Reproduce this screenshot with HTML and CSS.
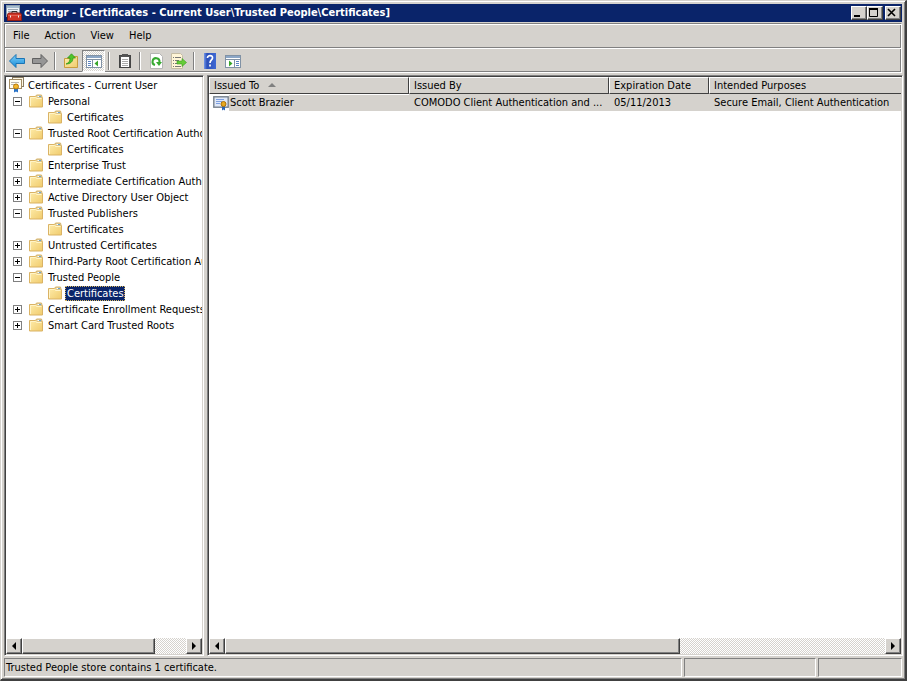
FILE: index.html
```html
<!DOCTYPE html>
<html lang="en">
<head>
<meta charset="utf-8">
<title>certmgr</title>
<link rel="stylesheet" href="styles.css">
</head>
<body>
<svg class="defs" aria-hidden="true">
  <defs>
    <linearGradient id="fold" x1="0" y1="0" x2="1" y2="1"><stop offset="0" stop-color="#ffeeae"/><stop offset="1" stop-color="#f0cb6c"/></linearGradient>
    <linearGradient id="blue" x1="0" y1="0" x2="0" y2="1"><stop offset="0" stop-color="#7fd0f8"/><stop offset="1" stop-color="#168bd8"/></linearGradient>
    <linearGradient id="help" x1="0" y1="0" x2="1" y2="0"><stop offset="0" stop-color="#7397e8"/><stop offset=".25" stop-color="#2c4fb8"/><stop offset="1" stop-color="#3f69d4"/></linearGradient>
    <symbol id="folder" viewBox="0 0 16 16">
      <path d="M1.500 3.500h6l1-1.500h5l.5 2 .5 1v9h-13z" fill="url(#fold)" stroke="#dab365"/>
      <path d="M8.500 2.500h5v2h-4z" fill="#fff" stroke="#c3a45f" stroke-width=".6"/><path d="M11 3.500h2" stroke="#6ba6cf"/>
      <path d="M2.500 13v-8.500h5l1 1h5" fill="none" stroke="#fff4c8"/>
    </symbol>
    <symbol id="cert" viewBox="0 0 16 16">
      <rect x=".8" y="1.800" width="14.400" height="10.400" fill="#dfe8f8" stroke="#76808c" stroke-width="1.400"/>
      <path d="M3 4.500h8M3 6.500h6M3 8.500h4" stroke="#7d9fe0"/>
      <path d="M9 10v5.500l1.500-1 1.500 1V10z" fill="#2a66b8"/>
      <circle cx="10.500" cy="9" r="2.500" fill="#e8a91d" stroke="#a96e08"/>
    </symbol>
    <symbol id="certs" viewBox="0 0 16 16">
      <rect x="4.500" y=".5" width="11" height="9" fill="#fff8e4" stroke="#897c63"/>
      <rect x="1.500" y="2.500" width="12" height="9" fill="#fffdf3" stroke="#a28c64"/>
      <path d="M3 5.500h8M3 7.500h5" stroke="#b9b6ad"/>
      <path d="M6 10v5.500l2-1 2 1V10z" fill="#2872c7"/>
      <circle cx="8" cy="9.500" r="2.500" fill="#f2b72c" stroke="#b87908"/>
    </symbol>
  </defs>
</svg>
<div class="window">
  <header class="titlebar">
    <svg class="icon" viewBox="0 0 16 16" aria-hidden="true">
      <rect x=".5" y=".5" width="13" height="11" fill="#eef2f6" stroke="#8b9dad"/><path d="M1 2h12" stroke="#a5bccf" stroke-width="2"/><path d="M2 4.500h10M2 6.500h4" stroke="#9aa8b4"/>
      <path d="M6 8V6.500h5V8" fill="none" stroke="#333"/><path d="M1.500 9.500l1-1.500h12l1 1.500v6h-14z" fill="#cf3526" stroke="#8b1a12"/><path d="M2 10.500h13" stroke="#e2604f"/><path d="M4.500 10.500v2M12.500 10.500v2" stroke="#eee"/>
    </svg>
    <h1>certmgr - [Certificates - Current User\Trusted People\Certificates]</h1>
    <div class="captions">
      <button aria-label="Minimize"><svg viewBox="0 0 12 10"><path d="M2 8h6" stroke="#000" stroke-width="2"/></svg></button>
      <button aria-label="Maximize"><svg viewBox="0 0 12 10"><path d="M1.500 1v7.500h8V1" fill="none" stroke="#000"/><path d="M1 1h9" stroke="#000" stroke-width="2"/></svg></button>
      <button class="close" aria-label="Close"><svg viewBox="0 0 12 10"><path d="M2 1l7 7M9 1L2 8" stroke="#000" stroke-width="1.600"/></svg></button>
    </div>
  </header>
  <div class="bars">
    <nav class="menubar" aria-label="Menu"><button>File</button><button>Action</button><button>View</button><button>Help</button></nav>
    <div class="toolbar" role="toolbar" aria-label="Standard">
      <button aria-label="Back"><svg viewBox="0 0 16 16"><path d="M.5 8l6.500-6.500v4h8.500v5H7v4z" fill="url(#blue)" stroke="#1b75b5"/></svg></button>
      <button aria-label="Forward"><svg viewBox="0 0 16 16"><path d="M15.500 8L9 1.500v4H.5v5H9v4z" fill="#969696" stroke="#606060"/></svg></button>
      <i></i>
      <button aria-label="Up one level"><svg viewBox="0 0 16 16"><path d="M1.500 5.500h7l1-2h5v11h-13z" fill="url(#fold)" stroke="#c99d3e"/><path d="M3 11c3-1 4-3 4-6H4.500L8.500.8l4 4.200H10c0 4-3 6-7 6z" fill="#4fc52c" stroke="#2b9217" stroke-width=".7"/></svg></button>
      <button class="pressed" aria-label="Show console tree" aria-pressed="true"><svg viewBox="0 0 16 16"><rect x=".5" y="2.500" width="15" height="12" fill="#fff" stroke="#8192a5"/><path d="M1 4h14" stroke="#8ba6c6" stroke-width="2"/><path d="M1 6.500h14M6.500 6v8" stroke="#8192a5"/><path d="M2 8.500h3M2 10.500h3M2 12.500h3" stroke="#5c83c2"/><path d="M12 7.500v6L8.500 10.500z" fill="#38a529"/></svg></button>
      <i></i>
      <button aria-label="Properties"><svg viewBox="0 0 16 16"><rect x="2.500" y="2.500" width="11" height="12" fill="#555" stroke="#444"/><path d="M4 4h8v10H4z" fill="#fff"/><path d="M5 1h6v3H5z" fill="#555"/><path d="M5 6.500h6M5 8.500h6M5 10.500h6M5 12.500h6" stroke="#aaa"/></svg></button>
      <i></i>
      <button aria-label="Refresh"><svg viewBox="0 0 16 16"><path d="M2.500.5h9l3 3v12h-12z" fill="#fff" stroke="#b5b5b5"/><path d="M7 12A3.500 3.500 0 1 1 11.500 9" fill="none" stroke="#37aa32" stroke-width="2"/><path d="M8 9h6l-3 4z" fill="#37aa32"/></svg></button>
      <button aria-label="Export list"><svg viewBox="0 0 16 16"><path d="M.5.5h9l2 2v13H.5z" fill="#fff5d7" stroke="#c5bca4"/><path d="M2 4.500h1M4 4.500h6M2 7.500h1M4 7.500h4M2 10.500h1M4 10.500h2M2 13.500h1M4 13.500h6" stroke="#777"/><path d="M6 8h5V5.500l4.500 4-4.500 4V11H6z" fill="#66cc38" stroke="#389b20" stroke-width=".6"/></svg></button>
      <i></i>
      <button aria-label="Help"><svg viewBox="0 0 16 16"><path d="M2 0h12v16H2z" fill="url(#help)"/><path d="M5.500 5c0-3.500 5.500-3 5 0 0 2-2.500 2-2.500 5M8 11.500v2" fill="none" stroke="#fff" stroke-width="1.700"/></svg></button>
      <button aria-label="Show action pane"><svg viewBox="0 0 16 16"><rect x=".5" y="2.500" width="15" height="12" fill="#fff" stroke="#8192a5"/><path d="M1 4h14" stroke="#8ba6c6" stroke-width="2"/><path d="M1 6.500h14M9.500 6v8" stroke="#8192a5"/><path d="M11 8.500h3M11 10.500h3M11 12.500h3" stroke="#5c83c2"/><path d="M4 7.500v6L7.500 10.500z" fill="#38a529"/></svg></button>
    </div>
  </div>
  <main>
    <section class="pane tree" aria-label="Console tree">
      <ul>
        <li class="root"><svg class="icon"><use href="#certs"/></svg><span>Certificates - Current User</span></li>
        <li><button class="minus" aria-label="Collapse"></button><svg class="icon"><use href="#folder"/></svg><span>Personal</span></li>
        <li class="child"><svg class="icon"><use href="#folder"/></svg><span>Certificates</span></li>
        <li><button class="minus" aria-label="Collapse"></button><svg class="icon"><use href="#folder"/></svg><span>Trusted Root Certification Authorities</span></li>
        <li class="child"><svg class="icon"><use href="#folder"/></svg><span>Certificates</span></li>
        <li><button class="plus" aria-label="Expand"></button><svg class="icon"><use href="#folder"/></svg><span>Enterprise Trust</span></li>
        <li><button class="plus" aria-label="Expand"></button><svg class="icon"><use href="#folder"/></svg><span>Intermediate Certification Authorities</span></li>
        <li><button class="plus" aria-label="Expand"></button><svg class="icon"><use href="#folder"/></svg><span>Active Directory User Object</span></li>
        <li><button class="minus" aria-label="Collapse"></button><svg class="icon"><use href="#folder"/></svg><span>Trusted Publishers</span></li>
        <li class="child"><svg class="icon"><use href="#folder"/></svg><span>Certificates</span></li>
        <li><button class="plus" aria-label="Expand"></button><svg class="icon"><use href="#folder"/></svg><span>Untrusted Certificates</span></li>
        <li><button class="plus" aria-label="Expand"></button><svg class="icon"><use href="#folder"/></svg><span>Third-Party Root Certification Authorities</span></li>
        <li><button class="minus" aria-label="Collapse"></button><svg class="icon"><use href="#folder"/></svg><span>Trusted People</span></li>
        <li class="child"><svg class="icon"><use href="#folder"/></svg><span class="selected">Certificates</span></li>
        <li><button class="plus" aria-label="Expand"></button><svg class="icon"><use href="#folder"/></svg><span>Certificate Enrollment Requests</span></li>
        <li><button class="plus" aria-label="Expand"></button><svg class="icon"><use href="#folder"/></svg><span>Smart Card Trusted Roots</span></li>
      </ul>
      <div class="scroll"><button aria-label="Scroll left"><svg viewBox="0 0 8 8"><path d="M6 0v8L2 4z"/></svg></button><div class="track"><div class="thumb"></div></div><button aria-label="Scroll right"><svg viewBox="0 0 8 8"><path d="M2 0v8l4-4z"/></svg></button></div>
    </section>
    <section class="pane list" aria-label="Certificates">
      <div class="tablewrap">
        <table>
          <colgroup><col class="wide"><col class="wide"><col class="narrow"><col></colgroup>
          <thead><tr><th>Issued To <svg class="sort" viewBox="0 0 8 4"><path d="M4 0l4 4H0z" fill="#808080"/></svg></th><th>Issued By</th><th>Expiration Date</th><th class="last">Intended Purposes</th></tr></thead>
          <tbody><tr><td class="name"><div><svg class="icon"><use href="#cert"/></svg><span>Scott Brazier</span></div></td><td>COMODO Client Authentication and ...</td><td>05/11/2013</td><td>Secure Email, Client Authentication</td></tr></tbody>
        </table>
      </div>
      <div class="scroll"><button aria-label="Scroll left"><svg viewBox="0 0 8 8"><path d="M6 0v8L2 4z"/></svg></button><div class="track"><div class="thumb"></div></div><button aria-label="Scroll right"><svg viewBox="0 0 8 8"><path d="M2 0v8l4-4z"/></svg></button></div>
    </section>
  </main>
  <footer><div>Trusted People store contains 1 certificate.</div><div></div><div></div></footer>
</div>
</body>
</html>
```
FILE: styles.css
```css
* { box-sizing: border-box; }
:root { --face: #d5d2cd; --shade: #808080; --dark: #404040; }
body {
  margin: 0;
  background: var(--face);
  color: #000;
  font: 11px/16px Tahoma, "DejaVu Sans Condensed", "DejaVu Sans", sans-serif;
}
button { font: inherit; color: inherit; margin: 0; padding: 0; border: 0; background: none; }
.defs { position: absolute; width: 0; height: 0; }
.icon { width: 16px; height: 16px; flex: none; display: block; }

.window {
  display: flex;
  flex-direction: column;
  min-height: 100vh;
  padding: 3px 2px 2px 3px;
  border: 1px solid var(--dark);
  border-top-color: var(--face);
  border-left-color: var(--face);
  border-right-width: 2px;
  border-bottom-width: 2px;
  box-shadow: inset 1px 1px #fff, inset -1px -1px var(--shade);
}
.titlebar {
  display: flex;
  align-items: center;
  height: 18px;
  margin-right: 1px;
  padding: 0 1px 0 2px;
  background: #0a246a;
  color: #fff;
}
.titlebar h1 { flex: 1; margin: 0 2px; font-size: 11px; line-height: 16px; white-space: nowrap; overflow: hidden; }
.captions { display: flex; }
.captions button { width: 16px; height: 14px; }
.captions .close { margin-left: 2px; }
.captions svg { display: block; width: 12px; height: 10px; }
.captions button, .scroll button, .thumb {
  background: var(--face);
  border: 1px solid;
  border-color: #fff var(--dark) var(--dark) #fff;
  box-shadow: inset -1px -1px var(--shade);
}
.bars { margin: 1px 1px 2px 0; border: 1px solid; border-color: var(--shade) #fff #fff var(--shade); box-shadow: inset 1px 1px #fff, inset -1px -1px var(--shade); }
.menubar { display: flex; height: 24px; align-items: center; border-bottom: 1px solid var(--shade); }
.menubar button { padding: 0 7px 0 8px; }
.toolbar { display: flex; align-items: center; height: 24px; border-top: 1px solid #fff; }
.toolbar button { width: 23px; height: 22px; display: grid; place-items: center; }
.toolbar svg { width: 16px; height: 16px; display: block; }
.toolbar i { width: 2px; height: 18px; margin: 0 3px; border-left: 1px solid var(--shade); border-right: 1px solid #fff; }
.toolbar .pressed {
  border: 1px solid;
  border-color: var(--shade) #fff #fff var(--shade);
  background: repeating-conic-gradient(#fff 0 25%, var(--face) 0 50%) 0 0 / 2px 2px;
}

main { flex: 1; display: grid; grid-template-columns: 200px minmax(0, 1fr); gap: 3px; }
.pane {
  display: flex;
  flex-direction: column;
  min-width: 0;
  background: #fff;
  border: 1px solid;
  border-color: var(--shade) #fff #fff var(--shade);
  box-shadow: inset 1px 1px var(--dark), inset -1px -1px var(--face);
  padding: 1px;
}
.tree ul { flex: 1; list-style: none; margin: 0; padding: 0; overflow: hidden; }
.tree li { display: flex; align-items: center; height: 16px; padding-left: 7px; white-space: nowrap; }
.tree li.root { padding-left: 2px; }
.tree li.child { padding-left: 41px; }
.tree li button { width: 9px; height: 9px; margin-right: 6px; flex: none; border: 1px solid var(--shade); }
.minus { background: linear-gradient(#000, #000) center / 5px 1px no-repeat; }
.plus { background: linear-gradient(#000, #000) center / 5px 1px no-repeat, linear-gradient(#000, #000) center / 1px 5px no-repeat; }
.tree span { margin-left: 2px; padding: 0 2px; line-height: 15px; }
.tree .selected { padding: 0 1px 0 2px; background: #0a246a; color: #fff; outline: 1px dotted #d8b860; outline-offset: -1px; }

.scroll { display: flex; height: 16px; }
.scroll button { width: 16px; display: grid; place-items: center; flex: none; }
.scroll svg { width: 8px; height: 8px; display: block; }
.track { flex: 1; background: repeating-conic-gradient(#fff 0 25%, var(--face) 0 50%) 0 0 / 2px 2px; }
.thumb { width: 69%; height: 100%; }
.tree .thumb { width: 81%; }

.tablewrap { flex: 1; overflow: hidden; }
table { width: 100%; table-layout: fixed; border-collapse: separate; border-spacing: 0; }
.wide { width: 200px; }
.narrow { width: 100px; }
th, td { padding: 0 4px; text-align: left; font-weight: normal; white-space: nowrap; overflow: hidden; }
th {
  height: 17px;
  background: var(--face);
  border: 1px solid;
  border-color: #fff var(--dark) var(--dark) #fff;
  line-height: 15px;
}
th.last { border-right: 0; }
.sort { width: 8px; height: 4px; margin-left: 6px; vertical-align: 2px; }
td { height: 17px; background: var(--face); padding-left: 5px; }
td.name { background: #fff; padding: 0 0 0 4px; }
.name div { display: flex; }
.name span { flex: 1; background: var(--face); padding-left: 1px; }

footer { display: grid; grid-template-columns: minmax(0, 1fr) 132px 84px; gap: 2px; margin: 2px 1px 0 0; }
footer div { height: 19px; padding: 0 1px; line-height: 18px; border: 1px solid; border-color: var(--shade) #fff #fff var(--shade); white-space: nowrap; }
```
